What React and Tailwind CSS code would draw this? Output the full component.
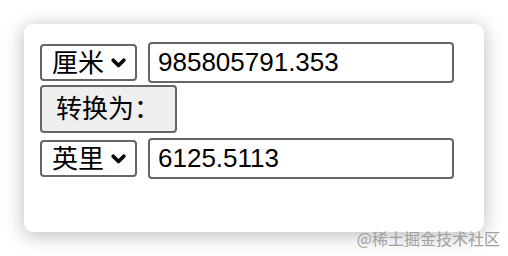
import { useState } from "react";

const font = { fontFamily: '"Liberation Sans", "Noto Sans CJK SC", sans-serif' };

// Bold down chevron used in the unit selects
const Chevron = () => (
    <svg
        className="pointer-events-none absolute right-[11px] top-1/2 -translate-y-1/2"
        width="15"
        height="10"
        viewBox="0 0 15 10"
        fill="none"
    >
        <path d="M2.2 2.2l5.3 5.3 5.3-5.3" stroke="#000" strokeWidth="3.6" strokeLinecap="round" strokeLinejoin="round" />
    </svg>
);

const UnitSelect = ({ value, onChange }) => (
    <div className="relative w-[97px] h-[37px] shrink-0">
        <select
            value={value}
            onChange={(e) => onChange(e.target.value)}
            className="appearance-none w-full h-full border-2 border-[#666] rounded-[4px] bg-white pl-[10px] text-[26px] text-black leading-none outline-none"
            style={font}
        >
            <option value="厘米">厘米</option>
            <option value="英里">英里</option>
            <option value="米">米</option>
            <option value="千米">千米</option>
        </select>
        <Chevron />
    </div>
);

const NumberInput = ({ value, onChange }) => (
    <input
        value={value}
        onChange={(e) => onChange(e.target.value)}
        className="w-[306px] h-[41px] border-2 border-[#666] rounded-[4px] bg-white pl-[8px] text-[26px] text-black outline-none"
        style={font}
    />
);

export default function App() {
    const [fromUnit, setFromUnit] = useState("厘米");
    const [toUnit, setToUnit] = useState("英里");
    const [fromValue, setFromValue] = useState("985805791.353");
    const [toValue, setToValue] = useState("6125.5113");

    return (
        <div className="relative w-[508px] h-[256px] bg-white pt-[24px] pl-[24px]" style={font}>
            <div className="w-[460px] h-[208px] rounded-[9px] bg-white shadow-[0_3px_20px_rgba(0,0,0,0.28)] pl-[16px] pt-[18px]">
                <div className="flex items-center gap-[11px] h-[41px]">
                    <UnitSelect value={fromUnit} onChange={setFromUnit} />
                    <NumberInput value={fromValue} onChange={setFromValue} />
                </div>
                <button
                    className="mt-[2px] w-[137px] h-[48px] border-2 border-[#666] rounded-[4px] bg-[#efefef] pl-[14px] text-left text-[26px] text-black"
                    style={font}
                >
                    转换为：
                </button>
                <div className="mt-[5px] flex items-center gap-[11px] h-[41px]">
                    <UnitSelect value={toUnit} onChange={setToUnit} />
                    <NumberInput value={toValue} onChange={setToValue} />
                </div>
            </div>
            <span
                className="absolute right-[8px] bottom-[10px] text-[16px] leading-none text-[#a0a0a0]"
                style={{ fontFamily: '"Noto Sans CJK SC", sans-serif' }}
            >
                @稀土掘金技术社区
            </span>
        </div>
    );
}
